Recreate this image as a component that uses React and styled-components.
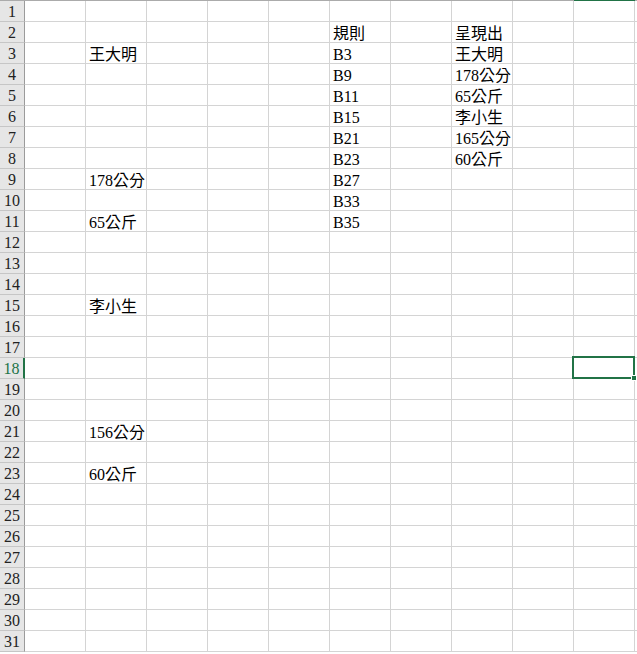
import React from 'react'
import styled, { createGlobalStyle } from 'styled-components'

const GlobalStyle = createGlobalStyle`
  html, body {
    margin: 0;
    padding: 0;
    background: #ffffff;
    overflow: hidden;
  }
`

const ROWS = 31
const COLS = 11 // A..K, K is cut off at the right edge

// cell contents, keyed by row -> column (1 = A, 2 = B ...)
const data = {
  2: { 6: '規則', 8: '呈現出' },
  3: { 2: '王大明', 6: 'B3', 8: '王大明' },
  4: { 6: 'B9', 8: '178公分' },
  5: { 6: 'B11', 8: '65公斤' },
  6: { 6: 'B15', 8: '李小生' },
  7: { 6: 'B21', 8: '165公分' },
  8: { 6: 'B23', 8: '60公斤' },
  9: { 2: '178公分', 6: 'B27' },
  10: { 6: 'B33' },
  11: { 2: '65公斤', 6: 'B35' },
  15: { 2: '李小生' },
  21: { 2: '156公分' },
  23: { 2: '60公斤' },
}

const selected = { row: 18, col: 10 }

const Sheet = styled.div`
  width: 637px;
  height: 654px;
  overflow: hidden;
  font-family: "Liberation Serif", "Noto Sans CJK TC", serif;
  font-size: 16px;
  color: #000;
`

const HeaderEdge = styled.div`
  display: grid;
  grid-template-columns: 25px repeat(${COLS - 1}, 61px) 1fr;
  height: 1px;
`

const EdgeSeg = styled.div`
  background: ${p => (p.$active ? '#217346' : '#ababab')};
`

const Grid = styled.div`
  display: grid;
  grid-template-columns: 25px repeat(${COLS - 1}, 61px) 1fr;
  grid-auto-rows: 21px;
`

const RowHead = styled.div`
  box-sizing: border-box;
  background: #e6e6e6;
  border-bottom: 1px solid #c6c6c6;
  border-right: ${p => (p.$active ? '2px solid #217346' : '1px solid #9b9b9b')};
  color: ${p => (p.$active ? '#217346' : '#222')};
  display: flex;
  align-items: flex-end;
  justify-content: center;
  line-height: 18px;
`

const Cell = styled.div`
  position: relative;
  box-sizing: border-box;
  border-right: 1px solid #d4d4d4;
  border-bottom: 1px solid #d4d4d4;
  padding: 0 0 0 3px;
  display: flex;
  align-items: flex-end;
  white-space: nowrap;
  line-height: 17px;
  overflow: visible;
  z-index: ${p => (p.$selected ? 2 : 'auto')};
  ${p =>
    p.$selected &&
    `
    &::before {
      content: '';
      position: absolute;
      left: -2px;
      top: -2px;
      right: -1px;
      bottom: -1px;
      border: 2px solid #217346;
      pointer-events: none;
    }
    &::after {
      content: '';
      position: absolute;
      right: -3px;
      bottom: -3px;
      width: 6px;
      height: 6px;
      background: #217346;
      border: 1px solid #fff;
      box-sizing: border-box;
    }
  `}
`

export default function App() {
  const rows = []
  for (let r = 1; r <= ROWS; r++) {
    const isSelRow = r === selected.row
    rows.push(
      <RowHead key={`h${r}`} $active={isSelRow}>
        {r}
      </RowHead>
    )
    for (let c = 1; c <= COLS; c++) {
      const text = data[r] && data[r][c]
      rows.push(
        <Cell key={`${r}-${c}`} $selected={isSelRow && c === selected.col}>
          {text}
        </Cell>
      )
    }
  }

  const edge = [<EdgeSeg key="e0" />]
  for (let c = 1; c <= COLS; c++) {
    edge.push(<EdgeSeg key={`e${c}`} $active={c === selected.col} />)
  }

  return (
    <>
      <GlobalStyle />
      <Sheet>
        <HeaderEdge>{edge}</HeaderEdge>
        <Grid>{rows}</Grid>
      </Sheet>
    </>
  )
}
